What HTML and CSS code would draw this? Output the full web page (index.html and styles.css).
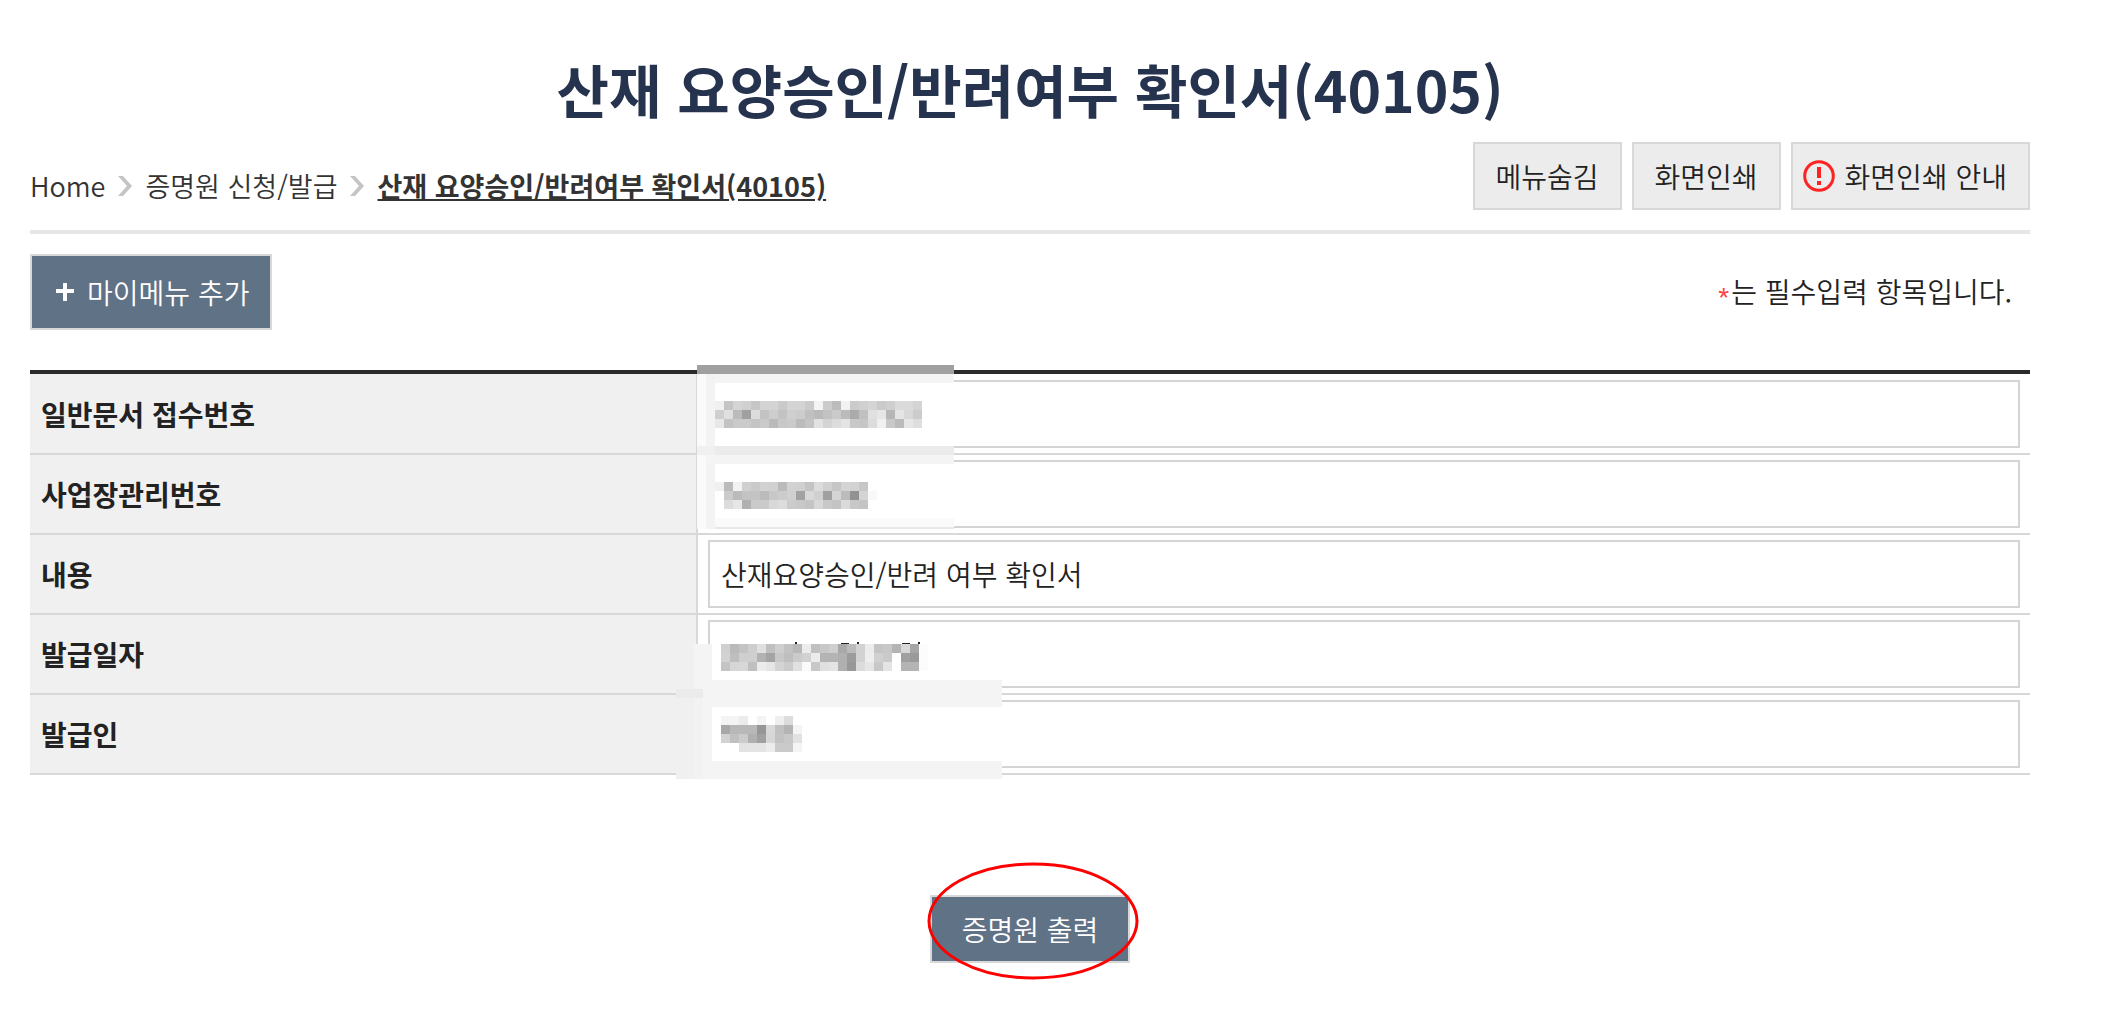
FILE: index.html
```
<!DOCTYPE html>
<html lang="ko">
<head>
    <meta charset="UTF-8">
    <meta name="viewport" content="width=device-width, initial-scale=1.0">
    <title>산재 요양승인/반려여부 확인서(40105)</title>
    <link rel="stylesheet" href="styles.css">
</head>
<body>
    <div class="container">
        <h1 class="page-title">산재 요양승인/반려여부 확인서(40105)</h1>

        <div class="location-bar">
            <nav class="breadcrumb">
                <a href="#">Home</a>
                <svg class="arrow" viewBox="0 0 14 20"><path d="M0 0h5l9 10-9 10H0l9-10z"/></svg>
                <a href="#">증명원 신청/발급</a>
                <svg class="arrow" viewBox="0 0 14 20"><path d="M0 0h5l9 10-9 10H0l9-10z"/></svg>
                <a href="#" class="current">산재 요양승인/반려여부 확인서(40105)</a>
            </nav>
            <div class="tools">
                <button type="button" class="btn">메뉴숨김</button>
                <button type="button" class="btn">화면인쇄</button>
                <button type="button" class="btn btn-info">
                    <svg class="icon-alert" viewBox="0 0 32 32">
                        <circle cx="16" cy="16" r="14.3"/>
                        <path d="M16 7v11M16 21v4"/>
                    </svg>
                    화면인쇄 안내
                </button>
            </div>
        </div>

        <div class="sub-bar">
            <button type="button" class="btn btn-dark btn-mymenu">
                <svg class="icon-plus" viewBox="0 0 20 20"><path d="M10 1v18M1 9h18"/></svg>
                마이메뉴 추가
            </button>
            <p class="required-note"><span class="star">*</span>는 필수입력 항목입니다.</p>
        </div>

        <table class="form-table">
            <tbody>
                <tr>
                    <th scope="row"><label for="docNo">일반문서 접수번호</label></th>
                    <td>
                        <input type="text" id="docNo" readonly>
                        <svg class="mask mask-number" width="257" height="164" shape-rendering="crispEdges">
                            <rect width="257" height="164" fill="#fff"/>
                            <rect width="9" height="164" fill="#fafafa"/>
                            <rect x="9" width="9" height="164" fill="#f3f3f3"/>
                            <rect x="18" y="9" width="239" height="9" fill="#f4f4f4"/>
                            <rect width="257" height="9" fill="#a0a0a0"/>
                            <rect y="81" width="18" height="9" fill="#f0f0f0"/>
                            <rect x="18" y="81" width="239" height="9" fill="#ebebeb"/>
                            <rect x="9" y="90" width="248" height="9" fill="#f4f4f4"/>
                            <rect x="18" y="153" width="239" height="9" fill="#fafafa"/>
                            <rect x="18" y="162" width="239" height="2" fill="#e8e8e8"/>
                            <g class="cells" data-x="18" data-y="36" data-rows="f0c4d4d0c6d4d4cad4d4cbf4ccbcf2cbd0d4cacfdadad4 cfe0bba0dcc3cec3cfccc0bac2cabbabc0e0e6b6e4d8cc e8c3cacac4cabac8cabbc4e2d4dce4c8c6dcf0c8bbe6de"></g>
                            <g class="cells" data-x="18" data-y="117" data-rows="f0bbf2d0cad2d0bbd2d0c4dcd0c6d4d2c6fe ffcbbbc3c3bbc8ccd0a2d8d0a0d4bb92d4f8 ffdce6b0cacad8dccbc8c4d8c8c4dac8c4fe"></g>
                        </svg>
                    </td>
                </tr>
                <tr>
                    <th scope="row"><label for="bizNo">사업장관리번호</label></th>
                    <td><input type="text" id="bizNo" readonly></td>
                </tr>
                <tr>
                    <th scope="row"><label for="content">내용</label></th>
                    <td><input type="text" id="content" value="산재요양승인/반려 여부 확인서" readonly></td>
                </tr>
                <tr>
                    <th scope="row"><label for="issueDate">발급일자</label></th>
                    <td>
                        <input type="text" id="issueDate" readonly>
                        <svg class="mask mask-date" width="308" height="47" shape-rendering="crispEdges">
                            <rect y="2" width="308" height="45" fill="#fff"/>
                            <rect y="2" width="18" height="45" fill="#f4f4f4"/>
                            <rect x="18" y="38" width="290" height="9" fill="#f4f4f4"/>
                            <path d="M101 0h2v2h-2zM146 2q5-3 10 0zM163 0h2v2h-2zM207 2q5-3 10 0zM224 0h2v2h-2z" fill="#222"/>
                            <g class="cells" data-x="27" data-y="2" data-rows="d0bac4cee0bfcfc2b8ecc0c8cfa8bbd2ecc4c8b4d8a6fc d2becfcfb2a4c8bfcbd2ecb4b4b09cd2eed0caffa09afc c4d6d8c0ece6d4cbe0fac8e0e4b098dce6c8e4ffb4b4fb"></g>
                        </svg>
                    </td>
                </tr>
                <tr>
                    <th scope="row"><label for="issuer">발급인</label></th>
                    <td>
                        <input type="text" id="issuer" readonly>
                        <svg class="mask mask-issuer" width="326" height="90" shape-rendering="crispEdges">
                            <rect width="326" height="90" fill="#f4f4f4"/>
                            <rect width="18" height="90" fill="#f0f0f0"/>
                            <rect x="18" width="9" height="90" fill="#f2f2f2"/>
                            <rect width="27" height="9" fill="#ebebeb"/>
                            <rect x="36" y="18" width="290" height="54" fill="#fff"/>
                            <g class="cells" data-x="45" data-y="27" data-rows="f4f4ecfff4ffeedcff a8b8b8b896d8c0b4f4 d2c0cbb0a0d6c2c8e2 ffffe2e4e4eccacaf4"></g>
                        </svg>
                    </td>
                </tr>
            </tbody>
        </table>

        <div class="actions">
            <div class="marked">
                <button type="button" class="btn btn-dark btn-print">증명원 출력</button>
                <svg class="ring" width="212" height="118"><ellipse cx="106" cy="59" rx="104" ry="57"/></svg>
            </div>
        </div>
    </div>
    <script src="mask.js"></script>
</body>
</html>
```
FILE: styles.css
```
* {
    box-sizing: border-box;
}
body {
    margin: 0;
    background-color: #fff;
    color: #222;
    font-family: "Noto Sans CJK KR", sans-serif;
    font-size: 28px;
    line-height: 40px;
}
.container {
    padding: 48px 73px 40px 30px;
}
.page-title {
    margin: 0;
    text-align: center;
    font-size: 57px;
    line-height: 80px;
    font-weight: 700;
    color: #26334f;
}
.location-bar {
    display: flex;
    justify-content: space-between;
    align-items: center;
    padding: 14px 0 20px;
    border-bottom: 4px solid #e6e6e6;
}
.breadcrumb {
    display: flex;
    align-items: center;
    gap: 13px;
    padding-top: 20px;
    font-size: 27px;
}
.breadcrumb a {
    color: #333;
    font-weight: 350;
    text-decoration: none;
}
.breadcrumb .current {
    font-weight: 700;
    text-decoration: underline;
}
.arrow {
    width: 14px;
    height: 20px;
    fill: #c4c4c4;
}
.tools {
    display: flex;
    gap: 10px;
}
.btn {
    height: 68px;
    padding: 0 21px;
    border: 2px solid #d8d8d8;
    background-color: #ececec;
    color: #222;
    font: inherit;
    font-weight: 350;
    cursor: pointer;
}
.btn-info {
    display: flex;
    align-items: center;
    gap: 10px;
    padding: 0 21px 0 10px;
}
.icon-alert {
    width: 32px;
    height: 32px;
    fill: none;
    stroke: #f22;
    stroke-width: 3;
}
.icon-alert path {
    stroke-width: 4;
}
.btn-dark {
    background-color: #607286;
    color: #fff;
}
.sub-bar {
    display: flex;
    justify-content: space-between;
    align-items: center;
    padding: 20px 18px 40px 0;
}
.btn-mymenu {
    display: flex;
    align-items: center;
    gap: 12px;
    height: 76px;
    padding: 0 21px 0 23px;
}
.icon-plus {
    width: 20px;
    height: 20px;
    fill: none;
    stroke: #fff;
    stroke-width: 4;
}
.required-note {
    margin: 0;
    padding-top: 5px;
    font-weight: 350;
}
.star {
    margin-right: 2px;
    color: #f44;
    font-family: "Liberation Sans", sans-serif;
    vertical-align: -4px;
}
.form-table {
    width: 100%;
    border-top: 4px solid #2a2a2a;
    border-spacing: 0;
    table-layout: fixed;
}
.form-table th {
    width: 33.4%;
    padding: 5px 11px;
    border-right: 2px solid #d8d8d8;
    border-bottom: 2px solid #d8d8d8;
    background-color: #f0f0f0;
    text-align: left;
    font-weight: 700;
}
.form-table td {
    position: relative;
    padding: 5px 10px;
    border-bottom: 2px solid #d8d8d8;
}
.form-table tr:first-child td {
    padding-top: 6px;
}
.form-table input {
    display: block;
    width: 100%;
    height: 68px;
    padding: 0 11px;
    border: 2px solid #d4d4d4;
    background-color: #fff;
    color: #222;
    font: inherit;
    font-weight: 350;
}
/* 개인정보 가림 */
.mask {
    position: absolute;
    z-index: 1;
}
.mask-number {
    top: -9px;
    left: -1px;
}
.mask-date {
    top: 27px;
    left: -4px;
}
.mask-issuer {
    top: -6px;
    left: -22px;
}
.actions {
    display: flex;
    justify-content: center;
    padding-top: 120px;
}
.marked {
    position: relative;
}
.btn-print {
    display: block;
    width: 200px;
}
.ring {
    position: absolute;
    top: -33px;
    left: -3px;
    fill: none;
    stroke: #f00;
    stroke-width: 3;
    pointer-events: none;
}
```
FILE: mask.js
```
// 두 자리 16진수 = 한 칸의 회색 값
const SIZE = 9;

document.querySelectorAll('.cells').forEach(function (group) {
    const x = Number(group.dataset.x);
    const y = Number(group.dataset.y);

    group.dataset.rows.split(' ').forEach(function (row, r) {
        row.match(/../g).forEach(function (gray, c) {
            const rect = document.createElementNS('http://www.w3.org/2000/svg', 'rect');
            rect.setAttribute('x', x + c * SIZE);
            rect.setAttribute('y', y + r * SIZE);
            rect.setAttribute('width', SIZE);
            rect.setAttribute('height', SIZE);
            rect.setAttribute('fill', '#' + gray + gray + gray);
            group.appendChild(rect);
        });
    });
});
```
